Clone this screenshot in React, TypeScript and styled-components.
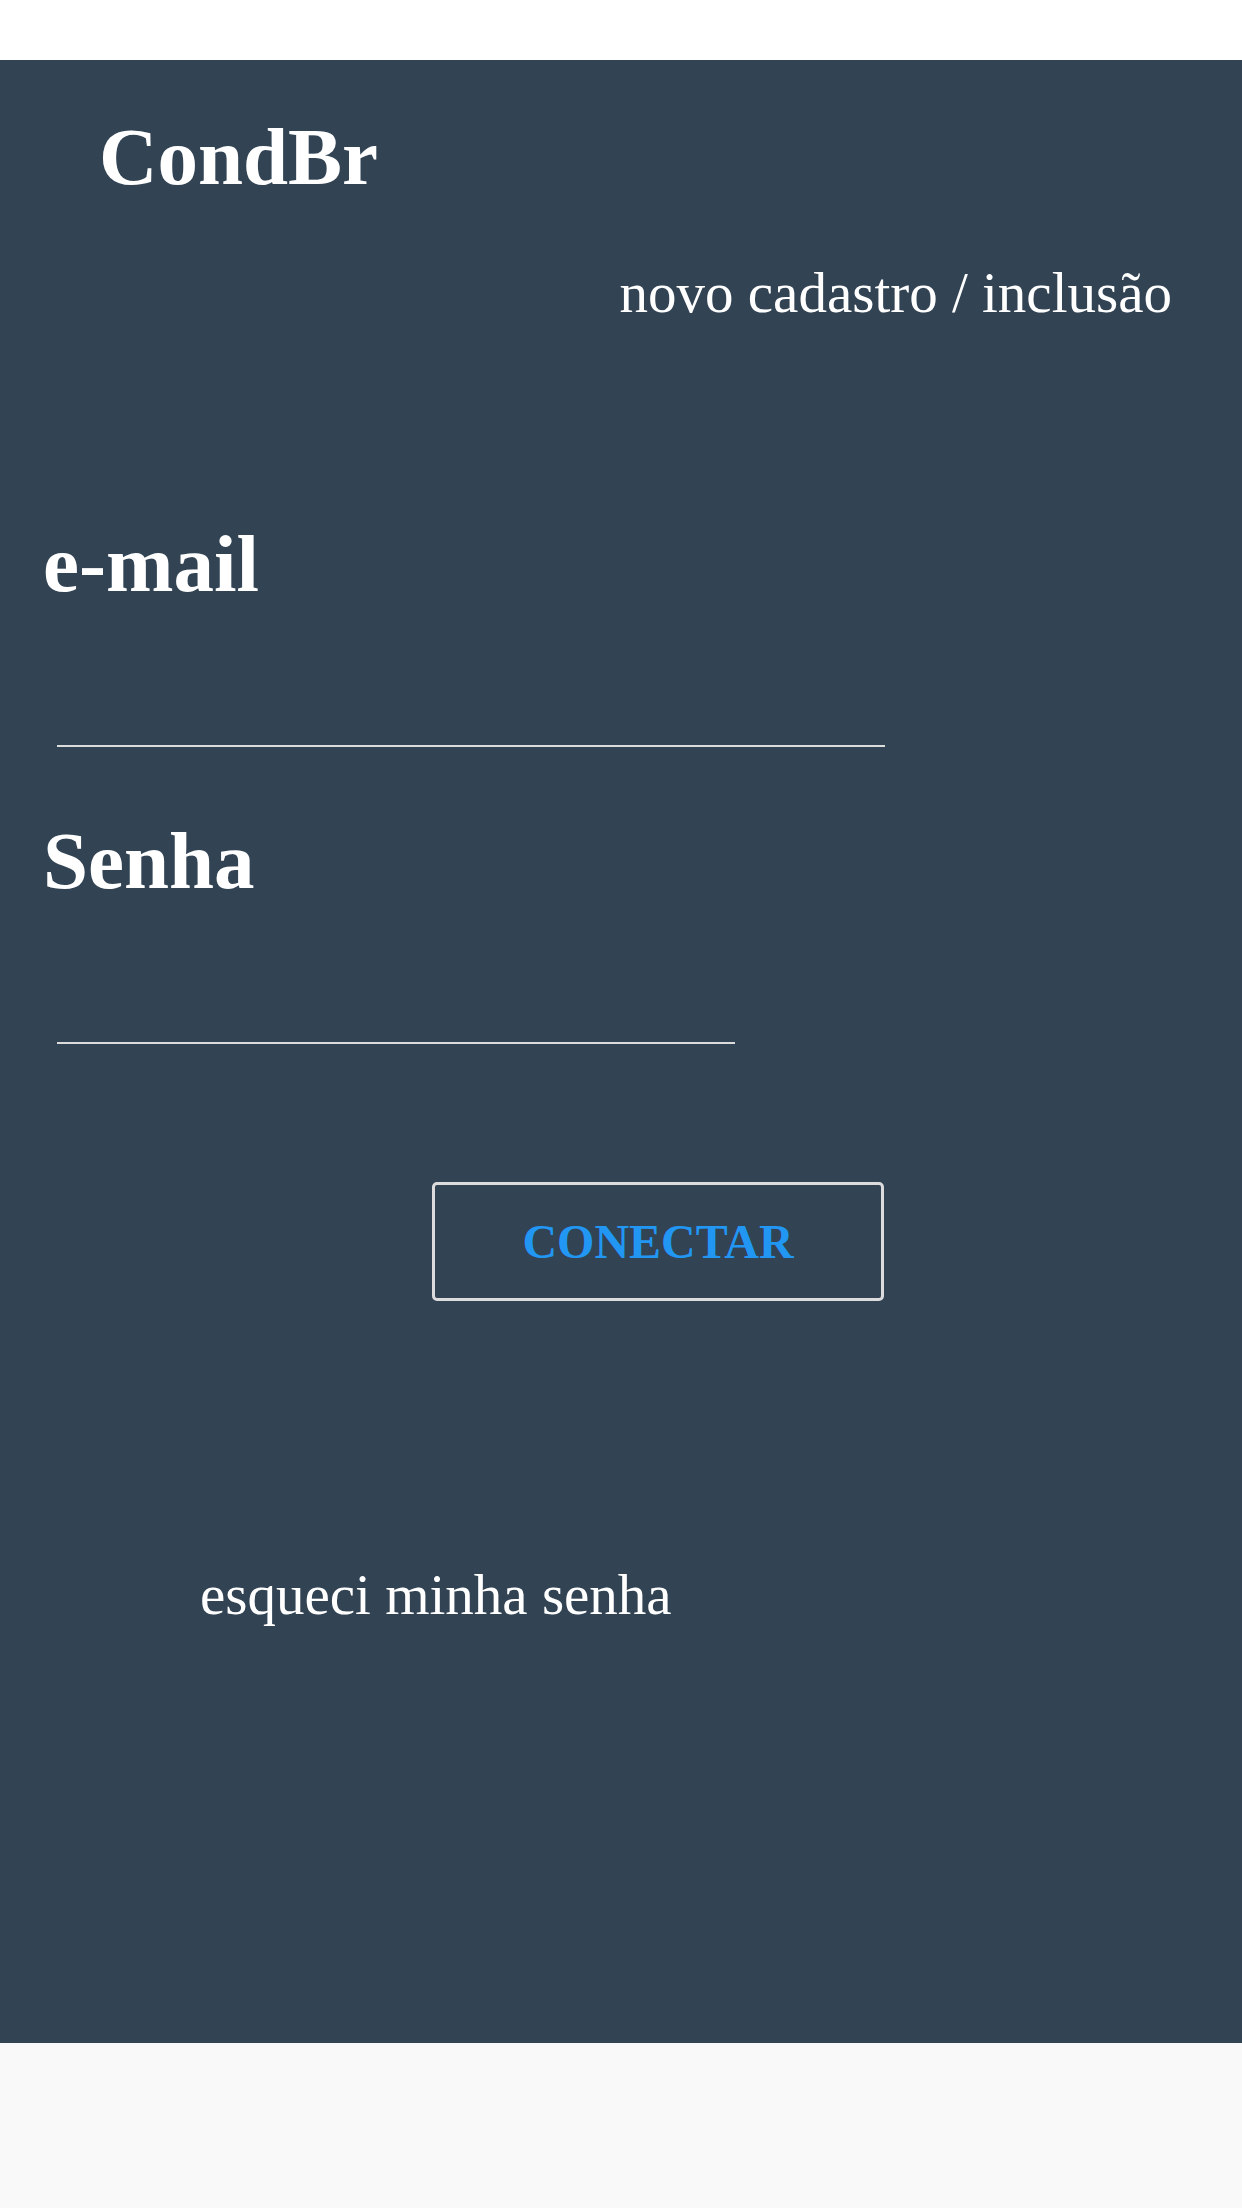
import React from "react";
import styled, { createGlobalStyle } from "styled-components";

const Global = createGlobalStyle`
  html, body {
    margin: 0;
    padding: 0;
    background: #f9f9f9;
    font-family: "Liberation Serif", "Times New Roman", serif;
  }
  * { box-sizing: border-box; }
`;

const Page = styled.div`
  display: flex;
  flex-direction: column;
  width: 1242px;
  min-height: 2208px;
  background: #f9f9f9;
`;

const TopBar = styled.div`
  height: 60px;
  background: #ffffff;
`;

const Panel = styled.main`
  display: flex;
  flex-direction: column;
  height: 1983px;
  background: #324354;
  color: #ffffff;
`;

const Brand = styled.h1`
  margin: 57px 0 0 99px;
  height: 80px;
  font-size: 81px;
  line-height: 80px;
  font-weight: 700;
`;

const NavLink = styled.a`
  align-self: flex-end;
  margin: 67px 70px 0 0;
  font-size: 57px;
  line-height: 57px;
  color: #ffffff;
  text-decoration: none;
`;

const Label = styled.label<{ $top: number }>`
  display: block;
  margin: ${(p) => p.$top}px 0 0 43px;
  height: 80px;
  font-size: 81px;
  line-height: 80px;
  font-weight: 700;
`;

const Field = styled.input<{ $width: number }>`
  display: block;
  width: ${(p) => p.$width}px;
  height: 143px;
  margin: 0 0 0 57px;
  padding: 0;
  border: none;
  border-bottom: 2px solid #dcdcdc;
  background: transparent;
  color: #ffffff;
  font-family: inherit;
  font-size: 48px;
  outline: none;
`;

const ConnectButton = styled.button`
  display: flex;
  align-items: center;
  justify-content: center;
  width: 452px;
  height: 119px;
  margin: 138px 0 0 432px;
  padding: 0;
  border: 3px solid #dcdcdc;
  border-radius: 5px;
  background: transparent;
  color: #2196f3;
  font-family: "Liberation Serif", "Times New Roman", serif;
  font-size: 48px;
  line-height: 48px;
  font-weight: 700;
  cursor: pointer;
`;

const ForgotLink = styled.a`
  align-self: flex-start;
  margin: 265px 0 0 200px;
  font-size: 57px;
  line-height: 57px;
  color: #ffffff;
  text-decoration: none;
`;

export default function App() {
  return (
    <>
      <Global />
      <Page>
        <TopBar />
        <Panel>
          <Brand>CondBr</Brand>
          <NavLink href="#">novo cadastro / inclusão</NavLink>
          <Label $top={203} htmlFor="email">e-mail</Label>
          <Field id="email" type="email" $width={828} />
          <Label $top={74} htmlFor="senha">Senha</Label>
          <Field id="senha" type="password" $width={678} />
          <ConnectButton type="button">CONECTAR</ConnectButton>
          <ForgotLink href="#">esqueci minha senha</ForgotLink>
        </Panel>
      </Page>
    </>
  );
}
